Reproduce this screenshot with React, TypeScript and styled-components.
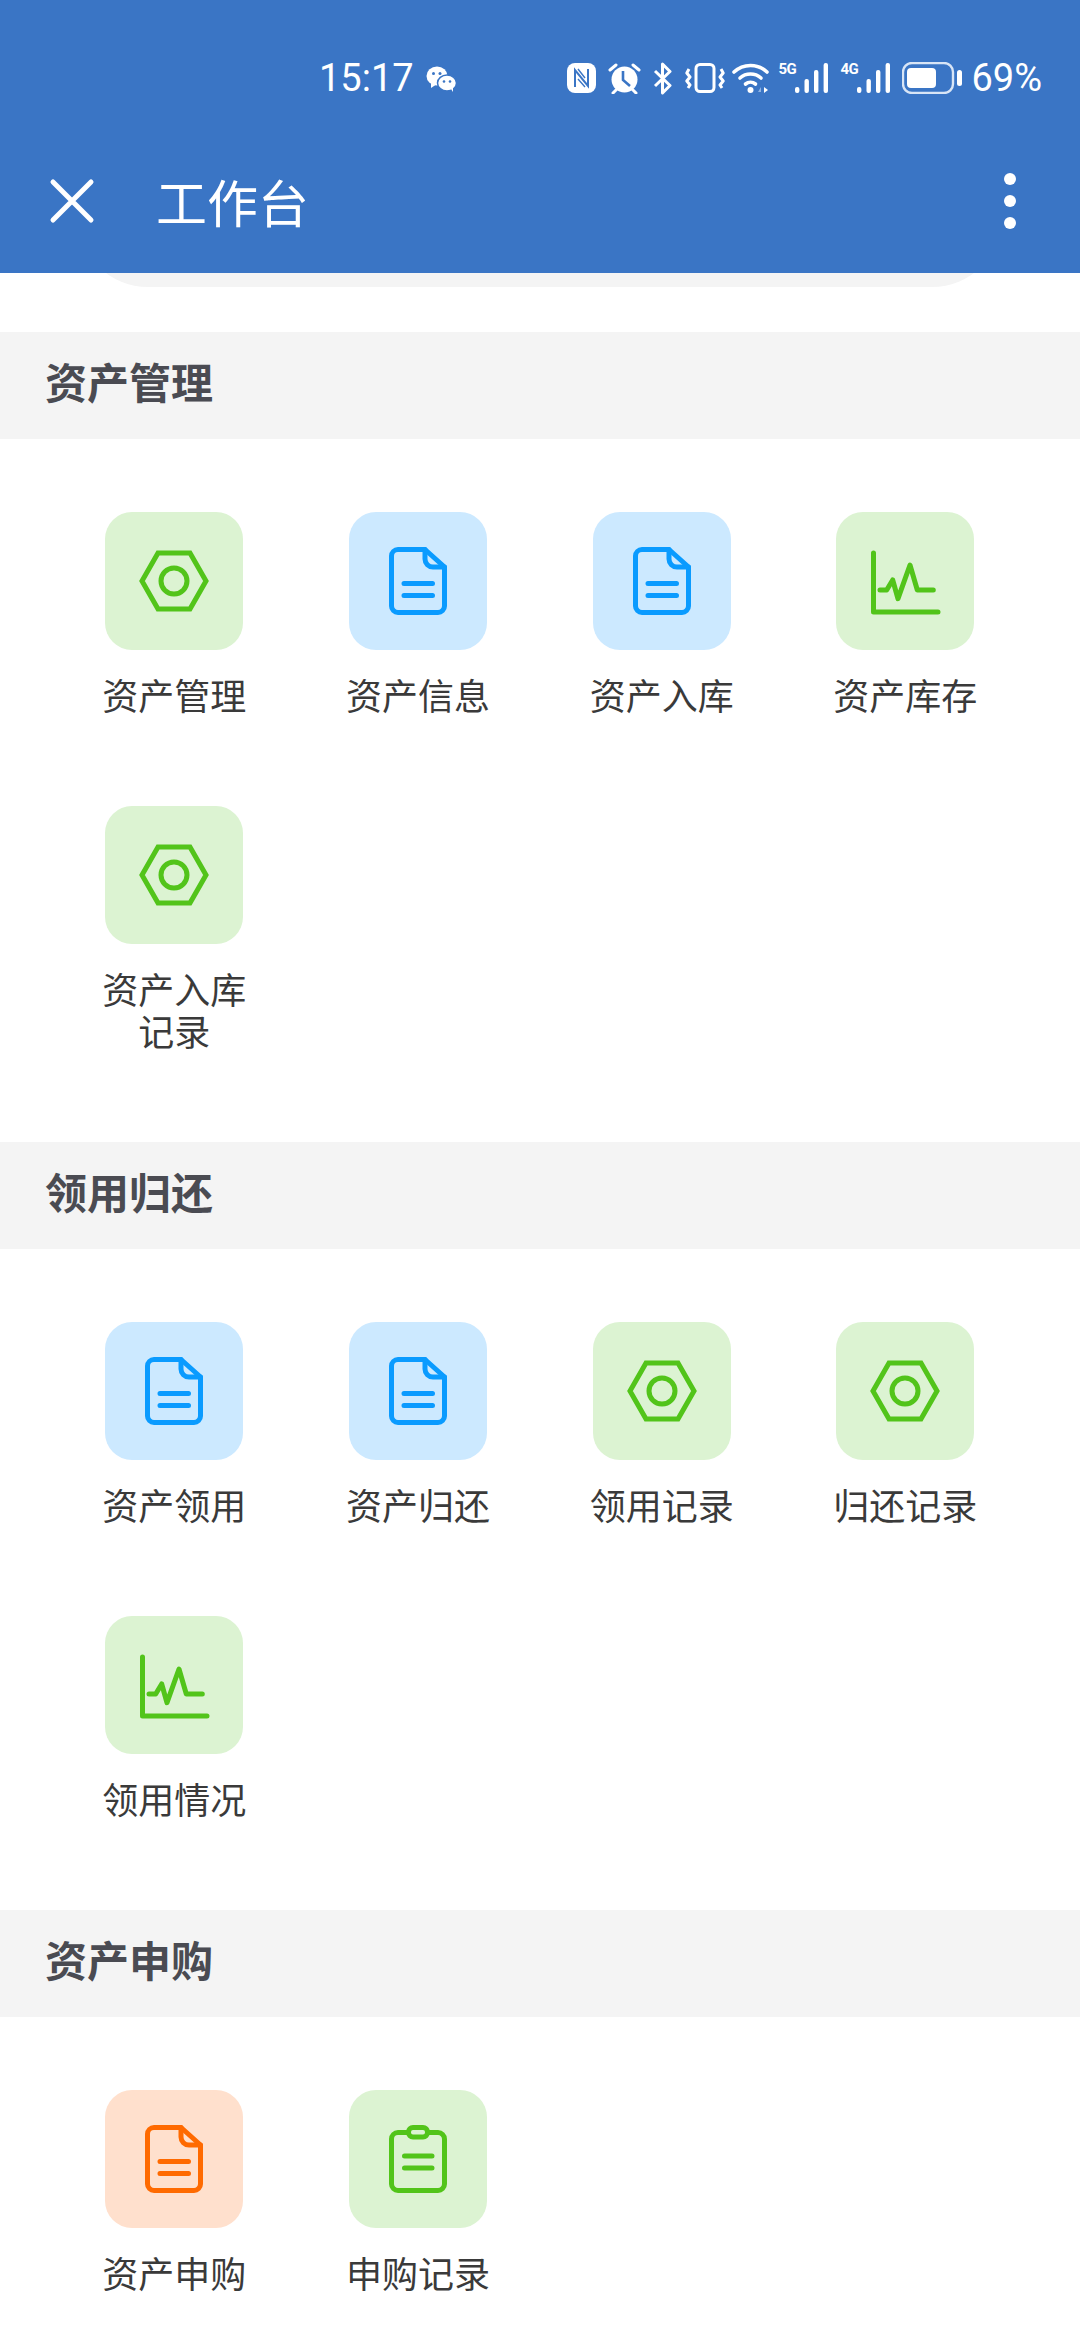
import React from "react";
import styled, { createGlobalStyle } from "styled-components";

const GlobalStyle = createGlobalStyle`
  html, body {
    margin: 0;
    padding: 0;
    background: #fff;
    font-family: "Noto Sans CJK SC", "Noto Sans", sans-serif;
  }
`;

const Page = styled.div`
  width: 1080px;
  height: 2340px;
  overflow: hidden;
  background: #fff;
`;

const Header = styled.header`
  position: relative;
  z-index: 1;
  background: #3a75c5;
  height: 273px;
  color: #fff;
`;

const StatusBar = styled.div`
  height: 128px;
  padding: 56px 38px 0 319px;
  box-sizing: border-box;
  display: flex;
  align-items: flex-start;
  font-family: Roboto, sans-serif;
  font-size: 38px;
  line-height: 44px;
`;

const Time = styled.span`
  display: block;
`;

const StatusIcons = styled.div`
  margin-left: auto;
  display: flex;
  align-items: center;
  height: 44px;
`;

const StatusIcon = styled.svg<{ $ml?: number }>`
  display: block;
  flex: none;
  margin-left: ${(p) => p.$ml ?? 0}px;
`;

const NetLabel = styled.span<{ $ml: number }>`
  align-self: flex-start;
  margin-left: ${(p) => p.$ml}px;
  margin-top: 6px;
  width: 17px;
  font-size: 15px;
  line-height: 14px;
  font-weight: 700;
  letter-spacing: -0.6px;
  white-space: nowrap;
`;

const Percent = styled.span`
  margin-left: 9px;
`;

const AppBar = styled.div`
  height: 145px;
  padding: 0 64px 0 49px;
  box-sizing: border-box;
  display: flex;
  align-items: center;
`;

const Title = styled.h1`
  margin: 0 0 0 61px;
  font-size: 51px;
  line-height: 60px;
  font-weight: 400;
`;

const Dots = styled.div`
  margin-left: auto;
  display: flex;
  flex-direction: column;
  gap: 10px;
`;

const Dot = styled.span`
  width: 12px;
  height: 12px;
  border-radius: 50%;
  background: #fff;
`;

const SearchStub = styled.div`
  height: 140px;
  margin: -126px 78px 0;
  border-radius: 70px;
  background: #f4f4f4;
`;

const Section = styled.section`
  &:first-of-type {
    margin-top: 45px;
  }
`;

const SectionTitle = styled.h2`
  margin: 0;
  height: 107px;
  padding-left: 45px;
  background: #f4f4f4;
  color: #4a4b52;
  font-size: 42px;
  line-height: 97px;
  font-weight: 700;
`;

const Grid = styled.div`
  display: grid;
  grid-template-columns: repeat(4, 243.67px);
  padding: 73px 52.5px 0;
`;

const Tile = styled.div`
  display: flex;
  flex-direction: column;
  align-items: center;
  padding-bottom: 91px;
`;

const IconBox = styled.div<{ $tint: Tint }>`
  width: 138px;
  height: 138px;
  border-radius: 27px;
  background: ${(p) => tints[p.$tint].bg};
  color: ${(p) => tints[p.$tint].fg};

  svg {
    display: block;
    width: 138px;
    height: 138px;
    fill: none;
    stroke: currentColor;
    stroke-width: 5;
    stroke-linecap: round;
    stroke-linejoin: round;
  }
`;

const Label = styled.div`
  margin-top: 23px;
  width: 150px;
  text-align: center;
  color: #3a3a3a;
  font-size: 36px;
  line-height: 42px;
`;

type Tint = "green" | "blue" | "orange";
type Glyph = "hex" | "doc" | "chart" | "clip";

const tints: Record<Tint, { bg: string; fg: string }> = {
  green: { bg: "#dcf3d2", fg: "#52c41a" },
  blue: { bg: "#cce9ff", fg: "#0a9bff" },
  orange: { bg: "#ffe0cd", fg: "#ff6a00" },
};

function TileGlyph({ glyph }: { glyph: Glyph }) {
  if (glyph === "hex") {
    return (
      <svg viewBox="0 0 138 138">
        <path d="M37 69 L53 41 H85 L101 69 L85 97 H53 Z" strokeLinejoin="miter" />
        <circle cx="69" cy="69" r="13" />
      </svg>
    );
  }
  if (glyph === "doc") {
    return (
      <svg viewBox="0 0 138 138">
        <path d="M49 37.5 H76 L95.5 55 V94 a6.5 6.5 0 0 1 -6.5 6.5 H49 a6.5 6.5 0 0 1 -6.5 -6.5 V44 a6.5 6.5 0 0 1 6.5 -6.5 Z" />
        <path d="M76 37.5 V47 a8 8 0 0 0 8 8 H95.5" />
        <path d="M55 71.5 H83.5 M55 83.5 H83.5" />
      </svg>
    );
  }
  if (glyph === "chart") {
    return (
      <svg viewBox="0 0 138 138">
        <path d="M37.5 41 V100 H102" />
        <path d="M44 78 H50.7 L56.7 68 L62 86.7 L74 53 L81.3 78 H97.3" />
      </svg>
    );
  }
  return (
    <svg viewBox="0 0 138 138">
      <path d="M59 42.5 H49 a6.5 6.5 0 0 0 -6.5 6.5 V94 a6.5 6.5 0 0 0 6.5 6.5 H89 a6.5 6.5 0 0 0 6.5 -6.5 V49 a6.5 6.5 0 0 0 -6.5 -6.5 H79" />
      <rect x="59.5" y="37.5" width="19" height="9.5" rx="4.5" />
      <path d="M55.5 66 H83 M55.5 78 H83" />
    </svg>
  );
}

type Item = { label: string; glyph: Glyph; tint: Tint };

const sections: { title: string; items: Item[] }[] = [
  {
    title: "资产管理",
    items: [
      { label: "资产管理", glyph: "hex", tint: "green" },
      { label: "资产信息", glyph: "doc", tint: "blue" },
      { label: "资产入库", glyph: "doc", tint: "blue" },
      { label: "资产库存", glyph: "chart", tint: "green" },
      { label: "资产入库记录", glyph: "hex", tint: "green" },
    ],
  },
  {
    title: "领用归还",
    items: [
      { label: "资产领用", glyph: "doc", tint: "blue" },
      { label: "资产归还", glyph: "doc", tint: "blue" },
      { label: "领用记录", glyph: "hex", tint: "green" },
      { label: "归还记录", glyph: "hex", tint: "green" },
      { label: "领用情况", glyph: "chart", tint: "green" },
    ],
  },
  {
    title: "资产申购",
    items: [
      { label: "资产申购", glyph: "doc", tint: "orange" },
      { label: "申购记录", glyph: "clip", tint: "green" },
    ],
  },
];

const BLUE = "#3a75c5";

function SignalBars() {
  return (
    <StatusIcon width="33" height="30" viewBox="0 0 33 30" fill="#fff">
      <rect x="0" y="24" width="4.4" height="6" rx="2" />
      <rect x="9.5" y="16" width="4.4" height="14" rx="2" />
      <rect x="19" y="7" width="4.4" height="23" rx="2" />
      <rect x="28.6" y="0" width="4.4" height="30" rx="2" />
    </StatusIcon>
  );
}

function StatusBarContent() {
  return (
    <StatusBar>
      <Time>15:17</Time>
      <StatusIcon $ml={12} width="31" height="26" viewBox="0 0 31 26" style={{ marginTop: 10 }}>
        <ellipse cx="11" cy="10" rx="10.5" ry="9.5" fill="#fff" />
        <path d="M5 16 L5 22 L11 18 Z" fill="#fff" />
        <ellipse cx="21" cy="17" rx="9.5" ry="8" fill="#fff" stroke={BLUE} strokeWidth="1.5" />
        <path d="M25 23 L27 26 L27 21 Z" fill="#fff" />
        <circle cx="7.5" cy="7.5" r="1.5" fill={BLUE} />
        <circle cx="14" cy="7.5" r="1.5" fill={BLUE} />
        <circle cx="18" cy="15.5" r="1.3" fill={BLUE} />
        <circle cx="24" cy="15.5" r="1.3" fill={BLUE} />
      </StatusIcon>
      <StatusIcons>
        <StatusIcon width="29" height="30" viewBox="0 0 29 30">
          <rect x="0" y="0" width="29" height="30" rx="8" fill="#fff" />
          <path d="M8 24 V7 L21 23 V6" fill="none" stroke={BLUE} strokeWidth="2" />
          <path d="M11 6 L18 15 M11 16 L18 24" fill="none" stroke={BLUE} strokeWidth="1.4" />
        </StatusIcon>
        <StatusIcon $ml={12} width="33" height="31" viewBox="0 0 33 31">
          <circle cx="16.5" cy="16.5" r="13" fill="#fff" />
          <path d="M2 7 L8 2 M31 7 L25 2 M8 27 L5 30 M25 27 L28 30" stroke="#fff" strokeWidth="3" strokeLinecap="round" />
          <path d="M15 8 V17 L22 23" fill="none" stroke={BLUE} strokeWidth="2.6" />
        </StatusIcon>
        <StatusIcon $ml={12} width="20" height="33" viewBox="0 0 20 33">
          <path d="M2 9 L17 23.5 L9.5 31 V2 L17 9.5 L2 24" fill="none" stroke="#fff" strokeWidth="3" strokeLinejoin="round" />
        </StatusIcon>
        <StatusIcon $ml={12} width="40" height="30" viewBox="0 0 40 30" fill="none" stroke="#fff" strokeWidth="3">
          <rect x="11" y="1.5" width="18" height="27" rx="4" />
          <path d="M4 6 L1.8 10 L5 14 L1.8 18 L5 22 L3 25" strokeLinejoin="round" />
          <path d="M36 6 L38.2 10 L35 14 L38.2 18 L35 22 L37 25" strokeLinejoin="round" />
        </StatusIcon>
        <StatusIcon $ml={7} width="37" height="30" viewBox="0 0 37 30" fill="none" stroke="#fff" strokeWidth="3.6" strokeLinecap="round">
          <path d="M2 9 A24 24 0 0 1 35 9" />
          <path d="M8 15 A16 16 0 0 1 29 15" />
          <path d="M13.5 21 A8 8 0 0 1 23.5 21" />
          <circle cx="18.5" cy="27" r="3" fill="#fff" stroke="none" />
          <path d="M26 29 L29 24 V29 Z" fill="#8fb3e3" stroke="none" />
          <path d="M32 24 L36 27 L32 30 Z" fill="#fff" stroke="none" />
        </StatusIcon>
        <NetLabel $ml={9}>5G</NetLabel>
        <SignalBars />
        <NetLabel $ml={12}>4G</NetLabel>
        <SignalBars />
        <StatusIcon $ml={12} width="60" height="32" viewBox="0 0 60 32">
          <rect x="1" y="1" width="50" height="30" rx="9" fill="none" stroke="#d8e5f6" strokeWidth="2.4" />
          <rect x="5" y="6" width="29" height="20" rx="4" fill="#fff" />
          <rect x="55" y="8" width="5" height="16" rx="2.5" fill="#fff" />
        </StatusIcon>
        <Percent>69%</Percent>
      </StatusIcons>
    </StatusBar>
  );
}

function App() {
  return (
    <Page>
      <GlobalStyle />
      <Header>
        <StatusBarContent />
        <AppBar>
          <svg width="46" height="46" viewBox="0 0 46 46" fill="none" stroke="#fff" strokeWidth="5" strokeLinecap="round">
            <path d="M4 4 L42 42 M42 4 L4 42" />
          </svg>
          <Title>工作台</Title>
          <Dots>
            <Dot />
            <Dot />
            <Dot />
          </Dots>
        </AppBar>
      </Header>
      <SearchStub />
      {sections.map((section) => (
        <Section key={section.title}>
          <SectionTitle>{section.title}</SectionTitle>
          <Grid>
            {section.items.map((item) => (
              <Tile key={item.label}>
                <IconBox $tint={item.tint}>
                  <TileGlyph glyph={item.glyph} />
                </IconBox>
                <Label>{item.label}</Label>
              </Tile>
            ))}
          </Grid>
        </Section>
      ))}
    </Page>
  );
}

export default App;
